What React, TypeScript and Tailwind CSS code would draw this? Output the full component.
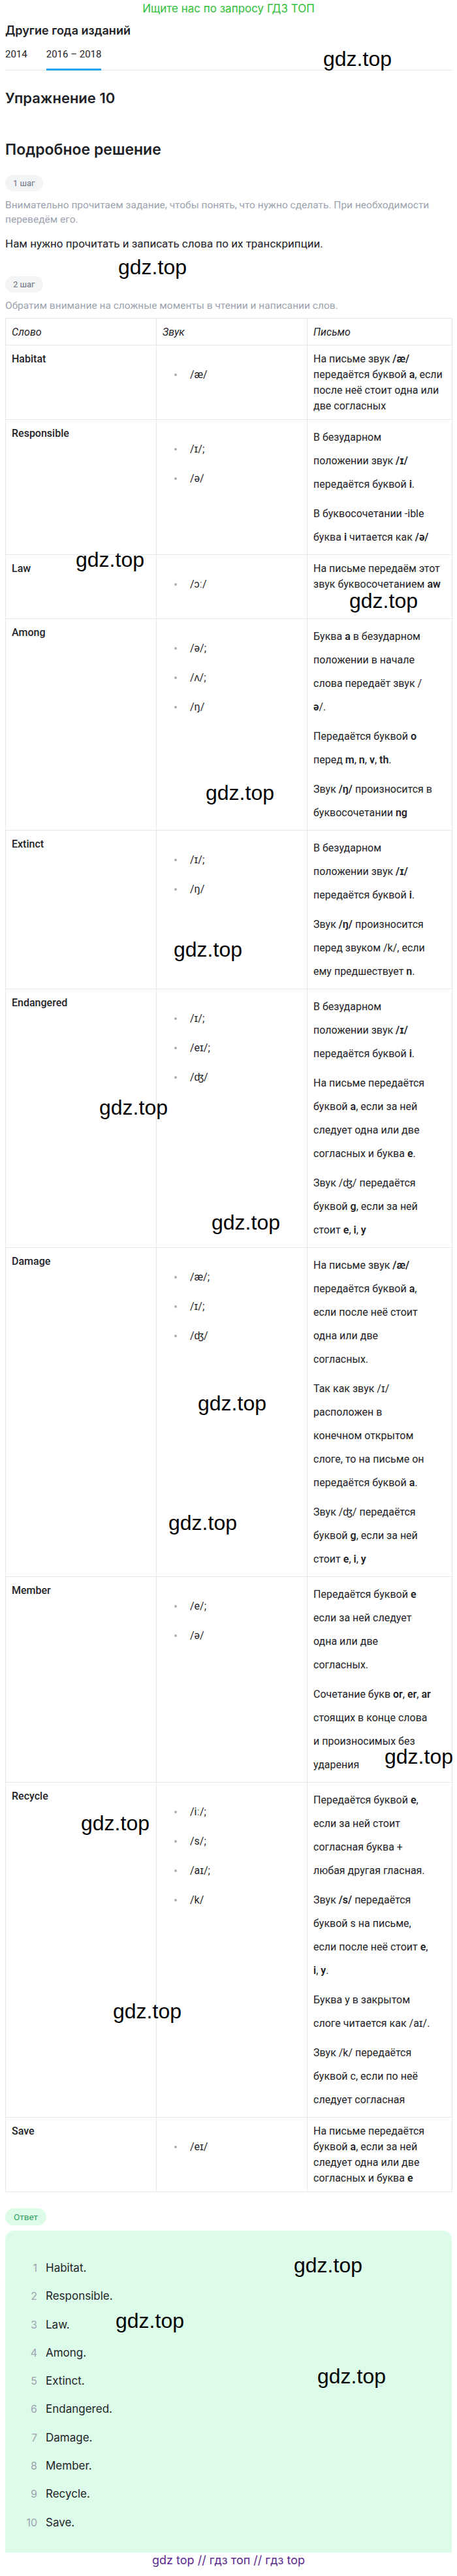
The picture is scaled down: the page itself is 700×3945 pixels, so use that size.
import React from "react";

type Row = { word: string; sounds: string[]; paras: string[][]; lh: number };

const rows: Row[] = [
  {
    word: "Habitat",
    sounds: ["/æ/"],
    lh: 24,
    paras: [["На письме звук **/æ/**", "передаётся буквой **а**, если", "после неё стоит одна или", "две согласных"]],
  },
  {
    word: "Responsible",
    sounds: ["/ɪ/;", "/ə/"],
    lh: 36,
    paras: [
      ["В безударном", "положении звук **/ɪ/**", "передаётся буквой **i**."],
      ["В буквосочетании -ible", "буква **i** читается как **/ə/**"],
    ],
  },
  {
    word: "Law",
    sounds: ["/ɔː/"],
    lh: 24,
    paras: [["На письме передаём этот", "звук буквосочетанием **aw**"]],
  },
  {
    word: "Among",
    sounds: ["/ə/;", "/ʌ/;", "/ŋ/"],
    lh: 36,
    paras: [
      ["Буква **а** в безударном", "положении в начале", "слова передаёт звук /", "**ə**/."],
      ["Передаётся буквой **о**", "перед **m**, **n**, **v**, **th**."],
      ["Звук **/ŋ/** произносится в", "буквосочетании **ng**"],
    ],
  },
  {
    word: "Extinct",
    sounds: ["/ɪ/;", "/ŋ/"],
    lh: 36,
    paras: [
      ["В безударном", "положении звук **/ɪ/**", "передаётся буквой **i**."],
      ["Звук **/ŋ/** произносится", "перед звуком /k/, если", "ему предшествует **n**."],
    ],
  },
  {
    word: "Endangered",
    sounds: ["/ɪ/;", "/eɪ/;", "/ʤ/"],
    lh: 36,
    paras: [
      ["В безударном", "положении звук **/ɪ/**", "передаётся буквой **i**."],
      ["На письме передаётся", "буквой **a**, если за ней", "следует одна или две", "согласных и буква **e**."],
      ["Звук /ʤ/ передаётся", "буквой **g**, если за ней", "стоит **e**, **i**, **y**"],
    ],
  },
  {
    word: "Damage",
    sounds: ["/æ/;", "/ɪ/;", "/ʤ/"],
    lh: 36,
    paras: [
      ["На письме звук **/æ/**", "передаётся буквой **а**,", "если после неё стоит", "одна или две", "согласных."],
      ["Так как звук /ɪ/", "расположен в", "конечном открытом", "слоге, то на письме он", "передаётся буквой **а**."],
      ["Звук /ʤ/ передаётся", "буквой **g**, если за ней", "стоит **e**, **i**, **y**"],
    ],
  },
  {
    word: "Member",
    sounds: ["/e/;", "/ə/"],
    lh: 36,
    paras: [
      ["Передаётся буквой **e**", "если за ней следует", "одна или две", "согласных."],
      ["Сочетание букв **or**, **er**, **ar**", "стоящих в конце слова", "и произносимых без", "ударения"],
    ],
  },
  {
    word: "Recycle",
    sounds: ["/iː/;", "/s/;", "/aɪ/;", "/k/"],
    lh: 36,
    paras: [
      ["Передаётся буквой **e**,", "если за ней стоит", "согласная буква +", "любая другая гласная."],
      ["Звук **/s/** передаётся", "буквой s на письме,", "если после неё стоит **e**,", "**i**, **y**."],
      ["Буква y в закрытом", "слоге читается как /aɪ/."],
      ["Звук /k/ передаётся", "буквой c, если по неё", "следует согласная"],
    ],
  },
  {
    word: "Save",
    sounds: ["/eɪ/"],
    lh: 24,
    paras: [["На письме передаётся", "буквой **a**, если за ней", "следует одна или две", "согласных и буква **e**"]],
  },
];

const answers = [
  "Habitat.",
  "Responsible.",
  "Law.",
  "Among.",
  "Extinct.",
  "Endangered.",
  "Damage.",
  "Member.",
  "Recycle.",
  "Save.",
];

const marks: [number, number][] = [
  [495, 74],
  [181, 393],
  [116, 841],
  [535, 904],
  [315, 1198],
  [266, 1438],
  [152, 1680],
  [324, 1856],
  [303, 2133],
  [258, 2316],
  [589, 2674],
  [124, 2776],
  [173, 3064],
  [450, 3453],
  [177, 3538],
  [486, 3623],
];

function rich(s: string) {
  return s.split("**").map((part, i) =>
    i % 2 === 1 ? (
      <b key={i} className="font-semibold">
        {part}
      </b>
    ) : (
      <React.Fragment key={i}>{part}</React.Fragment>
    )
  );
}

const cellBase = "border border-[#e5e7eb] align-top pl-[9px] pr-[6px] pt-[9px]";
const cell = `${cellBase} pb-[8px]`;
const headCell = `${cellBase} pb-[7px] text-left font-normal italic leading-6`;

export default function App() {
  return (
    <div className="relative min-h-screen w-full bg-white px-2 font-['Roboto','Liberation_Sans',sans-serif] text-[#1f2328]">
      <p className="pt-[3px] text-center font-['Inter',sans-serif] text-[17px] leading-5 text-[#2fbf3a]">
        Ищите нас по запросу ГДЗ ТОП
      </p>
      <h2 className="mt-[12px] font-['Inter',sans-serif] text-[18px] font-semibold leading-6">Другие года изданий</h2>
      <div className="mt-[12px] flex gap-[29px] border-b border-[#e5e7eb] text-[15px] leading-6">
        <span className="pb-[12px]">2014</span>
        <span className="relative pb-[12px]">
          2016 – 2018
          <span className="absolute bottom-[-1px] left-0 right-0 h-[3px] bg-[#1aa3e8]" />
        </span>
      </div>
      <h1 className="mt-[28px] font-['Inter',sans-serif] text-[22px] font-semibold leading-7">Упражнение 10</h1>
      <h2 className="mt-[52px] font-['Inter',sans-serif] text-[23px] font-semibold leading-[26px]">
        Подробное решение
      </h2>

      <div className="mt-[26px] inline-flex h-[25px] items-center rounded-full bg-[#f3f4f6] px-[12px] text-[13px] text-[#6b7280]">
        1 шаг
      </div>
      <p className="mt-[10px] text-[15.5px] leading-[22px] text-[#9ca3af]">
        <span className="whitespace-nowrap">
          Внимательно прочитаем задание, чтобы понять, что нужно сделать. При необходимости
        </span>
        <br />
        переведём его.
      </p>
      <p className="mt-[14px] whitespace-nowrap text-[17px] leading-6">
        Нам нужно прочитать и записать слова по их транскрипции.
      </p>

      <div className="mt-[38px] inline-flex h-[25px] items-center rounded-full bg-[#f3f4f6] px-[12px] text-[13px] text-[#6b7280]">
        2 шаг
      </div>
      <p className="mt-[9px] text-[15.5px] leading-[22px] text-[#9ca3af]">
        Обратим внимание на сложные моменты в чтении и написании слов.
      </p>

      <table className="mt-[8px] w-full table-fixed border-collapse text-[16px]">
        <colgroup>
          <col className="w-[231px]" />
          <col className="w-[231px]" />
          <col className="w-[222px]" />
        </colgroup>
        <thead>
          <tr>
            <th className={headCell}>Слово</th>
            <th className={headCell}>Звук</th>
            <th className={headCell}>Письмо</th>
          </tr>
        </thead>
        <tbody>
          {rows.map((r) => (
            <tr key={r.word}>
              <td className={`${cell} font-medium leading-6`}>{r.word}</td>
              <td className={cell}>
                <ul className="flex flex-col gap-[21px] pb-[32px] pt-[24px]">
                  {r.sounds.map((s, i) => (
                    <li key={i} className="flex items-center leading-6">
                      <span className="ml-[18px] h-[4px] w-[4px] rounded-full bg-[#a9adb3]" />
                      <span className="ml-[20px]">{s}</span>
                    </li>
                  ))}
                </ul>
              </td>
              <td className={cell}>
                <div className="flex flex-col gap-[9px]">
                  {r.paras.map((p, i) => (
                    <p key={i} className={r.lh === 36 ? "leading-[36px]" : "leading-6"}>
                      {p.map((line, j) => (
                        <span key={j} className="block whitespace-nowrap">
                          {rich(line)}
                        </span>
                      ))}
                    </p>
                  ))}
                </div>
              </td>
            </tr>
          ))}
        </tbody>
      </table>

      <div className="mt-[25px] inline-flex h-[26px] items-center rounded-full bg-[#dcfce7] px-[13px] text-[13.5px] text-[#2f9e5c]">
        Ответ
      </div>
      <div className="mt-[8px] rounded-t-[14px] bg-[#dcfce9] pb-[33px] pt-[44px] font-['Inter',sans-serif]">
        <ol className="flex flex-col gap-[17.3px]">
          {answers.map((a, i) => (
            <li key={a} className="flex items-center leading-[26px]">
              <span className="w-[49px] text-right text-[16px] text-[#9ca3af]">{i + 1}</span>
              <span className="ml-[13px] text-[17px]">{a}</span>
            </li>
          ))}
        </ol>
      </div>
      <p className="text-center font-['Inter',sans-serif] text-[18px] leading-6 text-[#5d2a8f]">
        gdz top // гдз топ // гдз top
      </p>

      {marks.map(([x, y], i) => (
        <span
          key={i}
          className="pointer-events-none absolute font-['Liberation_Sans',Arial,sans-serif] text-[32px] leading-[32px] text-black"
          style={{ left: x, top: y }}
        >
          gdz.top
        </span>
      ))}
    </div>
  );
}
